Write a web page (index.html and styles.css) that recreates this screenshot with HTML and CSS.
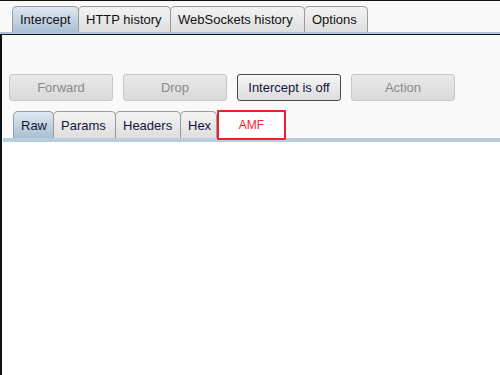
FILE: index.html
```html
<!DOCTYPE html>
<html lang="en">
<head>
  <meta charset="UTF-8">
  <title>Proxy - Intercept</title>
  <link rel="stylesheet" href="styles.css">
</head>
<body>
  <div class="window">
    <div class="tabs top-tabs">
      <div class="tab active">Intercept</div>
      <div class="tab">HTTP history</div>
      <div class="tab">WebSockets history</div>
      <div class="tab">Options</div>
    </div>
    <div class="tab-line"></div>

    <div class="panel">
      <div class="toolbar">
        <button class="btn" disabled>Forward</button>
        <button class="btn" disabled>Drop</button>
        <button class="btn on">Intercept is off</button>
        <button class="btn" disabled>Action</button>
      </div>

      <div class="tabs sub-tabs">
        <div class="tab active">Raw</div>
        <div class="tab">Params</div>
        <div class="tab">Headers</div>
        <div class="tab">Hex</div>
        <div class="tab amf">AMF</div>
      </div>
      <div class="sub-line"></div>

      <div class="editor"></div>
    </div>
  </div>
</body>
</html>
```

FILE: styles.css
```css
* {
  box-sizing: border-box;
  margin: 0;
  padding: 0;
}

body {
  width: 500px;
  height: 375px;
  overflow: hidden;
  background: #fff;
  font-family: "Liberation Sans", Arial, sans-serif;
  font-size: 13px;
  color: #111;
}

.window {
  height: 375px;
  border-top: 1px solid #111;
  background: #f9f9f9;
  display: flex;
  flex-direction: column;
}

.tabs {
  display: flex;
  align-items: flex-end;
}

.top-tabs {
  padding: 4px 0 0 12px;
  height: 31px;
}

.tab {
  height: 26px;
  padding: 0 7px;
  line-height: 25px;
  border: 1px solid #9a9a9a;
  border-bottom: none;
  border-radius: 5px 5px 0 0;
  background: linear-gradient(#f3f3f3, #dedede);
  white-space: nowrap;
}

.tab + .tab {
  margin-left: -1px;
}

.tab.active {
  background: linear-gradient(#dfe8f0, #a9bfd3);
}

.top-tabs .tab:nth-child(1) { width: 67px; }
.top-tabs .tab:nth-child(2) { width: 93px; }
.top-tabs .tab:nth-child(3) { width: 135px; }
.top-tabs .tab:nth-child(4) { width: 64px; }

.tab-line {
  height: 3px;
  background: #a9c0d8;
  border-bottom: 1px solid #1a1a1a;
}

.panel {
  flex: 1;
  display: flex;
  flex-direction: column;
  border-left: 2px solid #111;
  background: #f9f9f9;
}

.toolbar {
  display: flex;
  gap: 10px;
  padding: 39px 0 0 7px;
  height: 66px;
}

.btn {
  width: 104px;
  height: 27px;
  border: 1px solid #c6c6c6;
  border-radius: 3px;
  background: linear-gradient(#e9e9e9, #d9d9d9);
  font-family: "Liberation Sans", Arial, sans-serif;
  font-size: 13px;
  color: #8a8a8a;
}

.btn.on {
  border-color: #4a4a4a;
  background: linear-gradient(#f6f6f6, #dcdcdc);
  color: #14143a;
}

.sub-tabs {
  padding: 9px 0 0 11px;
  height: 37px;
}

.sub-tabs .tab {
  height: 27px;
  line-height: 27px;
  color: #14143a;
}

.sub-tabs .tab:nth-child(1) { width: 41px; }
.sub-tabs .tab:nth-child(2) { width: 63px; }
.sub-tabs .tab:nth-child(3) { width: 66px; }
.sub-tabs .tab:nth-child(4) { width: 37px; }

.sub-tabs .tab.amf {
  width: 69px;
  height: 30px;
  margin-left: 0;
  margin-bottom: -2px;
  border: 2px solid #e8232b;
  border-radius: 1px;
  background: #fff;
  color: #f2232b;
  font-size: 12px;
  text-align: center;
  line-height: 26px;
  position: relative;
  z-index: 1;
}

.sub-line {
  height: 4px;
  margin-left: 1px;
  background: #b9cde0;
}

.editor {
  flex: 1;
  background: #fff;
}
```
